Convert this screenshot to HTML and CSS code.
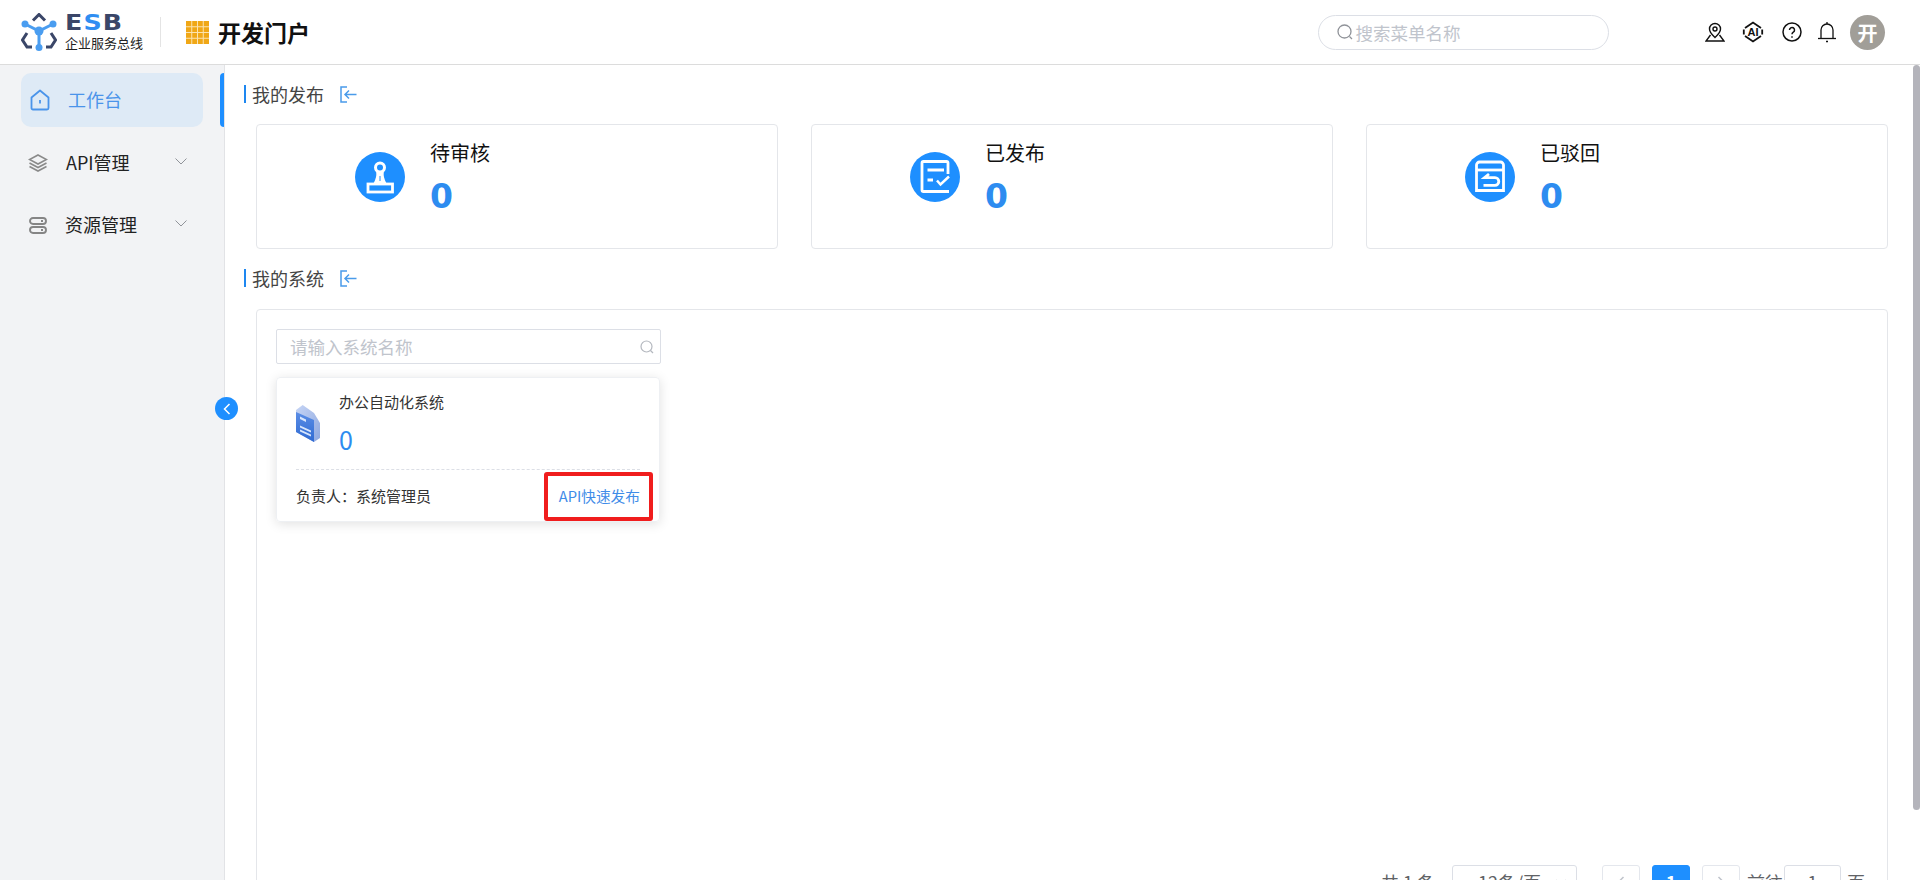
FILE: index.html
```html
<!DOCTYPE html>
<html lang="zh-CN">
<head>
<meta charset="utf-8">
<title>ESB 开发门户</title>
<link rel="stylesheet" href="styles.css">
</head>
<body>
<header class="topbar">
  <div class="brand">
    <svg class="brand-logo" viewBox="0 0 36 38" width="36" height="38" fill="none">
      <path d="M12 7.500 18 1.500 24 7.500" stroke="#3a4668" stroke-width="3"/>
      <path d="M6 20 1.500 27 6 34H11" stroke="#3a4668" stroke-width="3"/>
      <path d="M30 20 34.500 27 30 34H25" stroke="#3a4668" stroke-width="3"/>
      <path d="M4 11 18 18 32 11M18 18V34" stroke="#4a9df0" stroke-width="3"/>
      <circle cx="4" cy="11" r="3.500" fill="#4a9df0"/>
      <circle cx="32" cy="11" r="3.500" fill="#4a9df0"/>
      <circle cx="18" cy="18" r="4.500" fill="#4a9df0"/>
      <circle cx="18" cy="34.500" r="3.500" fill="#4a9df0"/>
    </svg>
    <div class="brand-text">
      <div class="brand-esb">E<span class="brand-s">S</span>B</div>
      <div class="brand-sub">企业服务总线</div>
    </div>
  </div>
  <div class="brand-divider"></div>
  <svg class="portal-grid" viewBox="0 0 23 23" width="23" height="23">
    <path d="M0 0h23v23H0z" fill="#f0a716"/>
    <path d="M5.750 0v23M11.500 0v23M17.250 0v23M0 5.750h23M0 11.500h23M0 17.250h23" stroke="#fbe3b0" stroke-width="1"/>
  </svg>
  <div class="portal-title">开发门户</div>
  <div class="top-search">
    <svg viewBox="0 0 18 18" width="18" height="18" fill="none" stroke="#909399" stroke-width="1.300"><circle cx="8.500" cy="8.500" r="6.500"/><path d="m13.500 13.500 2.500 2.500"/></svg>
    <span>搜索菜单名称</span>
  </div>
  <div class="top-icons">
    <svg viewBox="0 0 20 20" width="20" height="20" fill="none" stroke="#111" stroke-width="1.400"><path d="M10 15.500C7 12.500 4.500 10.500 4.500 7a5.500 5.500 0 0 1 11 0c0 3.500-2.500 5.500-5.500 8.500Z"/><circle cx="10" cy="7" r="2"/><path d="M5.500 13 1 19H19L14.500 13"/></svg>
    <svg viewBox="0 0 22 22" width="22" height="22" fill="none" stroke="#111" stroke-width="1.800"><path d="M3 7 11 1.500 19 7M3 15l8 5.500 8-5.500M1.800 8.500v5M20.200 8.500v5"/><text x="11" y="15" class="ai-text">AI</text></svg>
    <svg viewBox="0 0 20 20" width="20" height="20" fill="none" stroke="#111" stroke-width="1.500"><circle cx="10" cy="10" r="9"/><path d="M7.500 8a2.500 2.500 0 1 1 3.800 2.100c-.9.600-1.300 1-1.300 2.200"/><path d="M10 14.300v1.400"/></svg>
    <svg viewBox="0 0 20 22" width="20" height="22" fill="none" stroke="#111" stroke-width="1.300"><path d="M4 17V9a6 6 0 0 1 12 0v8"/><path d="M1 17.500h18"/><path d="M10 1v2M9 20.500h2"/></svg>
    <div class="avatar">开</div>
  </div>
</header>

<div class="layout">
  <aside class="sidebar">
    <a class="nav-item nav-active">
      <svg viewBox="0 0 20 22" width="20" height="22" fill="none" stroke="#4a94ea" stroke-width="1.800"><path d="M1.500 8.500 10 1.500l8.500 7V19a1.500 1.500 0 0 1-1.500 1.500H3A1.500 1.500 0 0 1 1.500 19Z" stroke-linejoin="round"/><path d="M10 11v3.500"/></svg>
      <span class="nav-label">工作台</span>
    </a>
    <a class="nav-item nav-api">
      <svg viewBox="0 0 20 18" width="20" height="18" fill="none" stroke="#8a8a8a" stroke-width="1.600"><path d="M10 1 18.500 5.500 10 10 1.500 5.500Z"/><path d="M1.500 9 10 13.500 18.500 9M1.500 12.500 10 17l8.500-4.500"/></svg>
      <span class="nav-label">API管理</span>
      <svg class="chev" viewBox="0 0 12 7" width="12" height="7" fill="none" stroke="#909399" stroke-width="1"><path d="m.5.500 5.500 5.500L11.500.500"/></svg>
    </a>
    <a class="nav-item nav-res">
      <svg viewBox="0 0 18 17" width="18" height="17" fill="none" stroke="#858585" stroke-width="1.900"><rect x="1" y="1" width="16" height="6" rx="3"/><rect x="1" y="10" width="16" height="6" rx="3"/><path d="M12 4h2M12 13h2"/></svg>
      <span class="nav-label">资源管理</span>
      <svg class="chev" viewBox="0 0 12 7" width="12" height="7" fill="none" stroke="#909399" stroke-width="1"><path d="m.5.500 5.500 5.500L11.500.500"/></svg>
    </a>
    <span class="active-bar"></span>
    <button class="collapse-btn" aria-label="收起">
      <svg viewBox="0 0 8 12" width="8" height="12" fill="none" stroke="#fff" stroke-width="1.500"><path d="M6.500 1 1.500 6l5 5"/></svg>
    </button>
  </aside>

  <main class="content">
    <div class="section-head">
      <span class="section-title">我的发布</span>
      <svg viewBox="0 0 17 17" width="17" height="17" fill="none" stroke="#4a9bea" stroke-width="1.500"><path d="M7 1H1v15h6"/><path d="M16.500 8.500H5M9 4.500l-4 4 4 4"/></svg>
    </div>
    <div class="stat-row">
      <div class="stat-card">
        <div class="stat-icon">
          <svg viewBox="0 0 50 50" width="50" height="50" fill="none" stroke="#fff" stroke-width="3"><circle cx="25" cy="15.500" r="4.500"/><path d="M22 20.500c.5 4-.5 7-2.500 10.500h11c-2-3.500-3-6.500-2.500-10.500Z" fill="#fff" stroke-width="1.500"/><path d="M25 24v5" stroke="#1e8fff" stroke-width="1"/><rect x="13" y="32" width="24.500" height="8" stroke-width="2.800"/></svg>
        </div>
        <div class="stat-body"><div class="stat-name">待审核</div><div class="stat-num">0</div></div>
      </div>
      <div class="stat-card">
        <div class="stat-icon">
          <svg viewBox="0 0 50 50" width="50" height="50" fill="none" stroke="#fff" stroke-width="2.800"><path d="M38 22V11a1.500 1.500 0 0 0-1.500-1.500H13.500A1.500 1.500 0 0 0 12 11v27a1.500 1.500 0 0 0 1.500 1.500H39"/><path d="M17.500 18H34M17.500 28H23"/><path d="M27 28.500l3.500 4 8.500-8" stroke-width="2.500"/></svg>
        </div>
        <div class="stat-body"><div class="stat-name">已发布</div><div class="stat-num">0</div></div>
      </div>
      <div class="stat-card">
        <div class="stat-icon">
          <svg viewBox="0 0 50 50" width="50" height="50" fill="none" stroke="#fff" stroke-width="2.800"><path d="M11.500 38.500V13a3 3 0 0 1 3-3h21a3 3 0 0 1 3 3v25.500Z"/><path d="M11.500 18h27"/><path d="M24 22l-4.500 3.700H30a3.800 3.800 0 0 1 0 7.600H18.500"/></svg>
        </div>
        <div class="stat-body"><div class="stat-name">已驳回</div><div class="stat-num">0</div></div>
      </div>
    </div>

    <div class="section-head section-head-second">
      <span class="section-title">我的系统</span>
      <svg viewBox="0 0 17 17" width="17" height="17" fill="none" stroke="#4a9bea" stroke-width="1.500"><path d="M7 1H1v15h6"/><path d="M16.500 8.500H5M9 4.500l-4 4 4 4"/></svg>
    </div>
    <div class="system-panel">
      <div class="system-search">
        <span>请输入系统名称</span>
        <svg viewBox="0 0 14 14" width="14" height="14" fill="none" stroke="#b4b8bf" stroke-width="1.200"><circle cx="6.500" cy="6.500" r="5.500"/><path d="m10.500 10.500 2.500 2.500"/></svg>
      </div>
      <div class="system-card">
        <div class="system-top">
          <svg class="system-icon" viewBox="0 0 25 37" width="25" height="37">
            <defs>
              <linearGradient id="sideGrad" x1="0" y1="0" x2="1" y2="1"><stop offset="0" stop-color="#c6d5f5"/><stop offset="1" stop-color="#8ea8e0"/></linearGradient>
              <linearGradient id="faceGrad" x1="0" y1="0" x2="0" y2="1"><stop offset="0" stop-color="#5b8ee6"/><stop offset="1" stop-color="#2f6ad2"/></linearGradient>
            </defs>
            <path d="M0 5 6.700 0 18 8l6 10v15l-6 4L0 27Z" fill="url(#sideGrad)"/>
            <path d="M0 7 18 15V37L0 27Z" fill="url(#faceGrad)"/>
            <path d="M4 11.500 10 14.500V17L4 14Z" fill="#d8e6fc"/>
            <path d="M4 20.500 15 25.500V27.500L4 22.500ZM4 24.500 15 29.500V31.500L4 26.500Z" fill="#d8e6fc"/>
          </svg>
          <div class="system-info">
            <div class="system-name">办公自动化系统</div>
            <div class="system-num">0</div>
          </div>
        </div>
        <div class="system-foot">
          <span class="owner">负责人：系统管理员</span>
          <a class="quick-link">API快速发布</a>
          <span class="red-mark"></span>
        </div>
      </div>
      <div class="pager">
        <span class="pager-total">共 1 条</span>
        <div class="pager-select"><span>12条/页</span>
          <svg viewBox="0 0 12 7" width="12" height="7" fill="none" stroke="#c0c4cc" stroke-width="1.200"><path d="m1 1 5 5 5-5"/></svg>
        </div>
        <div class="pager-btn"><svg viewBox="0 0 8 12" width="8" height="12" fill="none" stroke="#c0c4cc" stroke-width="1.500"><path d="M6.500 1 1.500 6l5 5"/></svg></div>
        <div class="pager-btn pager-current">1</div>
        <div class="pager-btn pager-next"><svg viewBox="0 0 8 12" width="8" height="12" fill="none" stroke="#c0c4cc" stroke-width="1.500"><path d="m1.500 1 5 5-5 5"/></svg></div>
        <span class="pager-text">前往</span>
        <div class="pager-input">1</div>
        <span class="pager-text">页</span>
      </div>
    </div>
  </main>
  <span class="scroll-thumb"></span>
</div>
</body>
</html>
```

FILE: styles.css
```css
* { box-sizing: border-box; }
html, body { margin: 0; height: 880px; overflow: hidden; background: #fff; }
body { font-family: "Noto Sans CJK SC", "Noto Sans", sans-serif; color: #222; }

.topbar { height: 65px; border-bottom: 1px solid #dcdcdc; display: flex; align-items: center; padding: 0 35px 0 21px; background: #fff; }
.brand { display: flex; align-items: center; gap: 8px; }
.brand-logo { display: block; }
.brand-text { display: flex; flex-direction: column; }
.brand-esb { font-family: "DejaVu Sans", sans-serif; font-weight: 700; font-size: 22px; line-height: 20px; letter-spacing: 1px; color: #3a4668; transform: scaleX(1.15); transform-origin: left center; }
.brand-s { color: #2f8ef2; }
.brand-sub { font-size: 13px; line-height: 18px; color: #222; margin-top: 1px; }
.brand-divider { width: 1px; height: 30px; background: #e4e4e4; margin: 0 25px 0 17px; }
.portal-grid { display: block; }
.portal-title { font-size: 23px; font-weight: 700; color: #111; margin-left: 9px; line-height: 30px; }
.top-search { margin-left: auto; width: 291px; height: 35px; border: 1px solid #dcdfe6; border-radius: 18px; display: flex; align-items: center; padding-left: 17px; gap: 2px; color: #c0c4cc; font-size: 17.500px; }
.top-icons { margin-left: 96px; display: flex; align-items: center; gap: 18px; }
.top-icons svg { display: block; }
.top-icons svg:nth-child(2) { margin-left: -1px; }
.top-icons svg:nth-child(4) { margin-left: -3px; }
.ai-text { font: 700 11px "Liberation Sans", sans-serif; fill: #111; stroke: none; text-anchor: middle; }
.avatar { width: 35px; height: 35px; border-radius: 50%; background: #a19e98; color: #fff; font-weight: 700; font-size: 20px; display: flex; align-items: center; justify-content: center; margin-left: -4.500px; }

.layout { position: relative; display: flex; height: 815px; }
.sidebar { position: relative; width: 225px; flex: none; background: #f2f3f5; border-right: 1px solid #e2e3e6; padding: 8px 21px 0; }
.nav-item { display: flex; align-items: center; height: 54px; margin-bottom: 9px; padding-left: 7px; gap: 18px; font-size: 18px; color: #222; width: 182px; }
.nav-api { margin-bottom: 8px; }
.nav-res { padding-left: 8px; gap: 18px; }
.nav-active { background: #deeaf6; border-radius: 10px; color: #4a94ea; padding-left: 9px; gap: 18px; }
.nav-label { line-height: 24px; white-space: nowrap; margin-top: -2px; }
.chev { margin-left: auto; margin-right: 16px; margin-top: -3px; }
.active-bar { position: absolute; right: 0; top: 8px; width: 4px; height: 54px; background: #1e8fff; border-radius: 4px 0 0 4px; }
.collapse-btn { position: absolute; right: -14px; top: 332px; width: 23px; height: 23px; border: 0; padding: 0; border-radius: 50%; background: #1e8fff; display: flex; align-items: center; justify-content: center; z-index: 2; }
.scroll-thumb { position: absolute; right: 0; top: 0; width: 7px; height: 745px; background: #b4b4bb; border-radius: 4px; }

.content { flex: 1; min-width: 0; padding: 0 32px 0 19px; }
.section-head { display: flex; align-items: center; height: 24px; margin-top: 17px; gap: 16px; }
.section-head-second { margin-top: 17px; }
.section-title { border-left: 2px solid #1e87f0; padding-left: 6px; font-size: 18px; line-height: 18px; color: #444; height: 18px; }
.stat-row { display: flex; gap: 33px; margin: 18px 0 0 12px; }
.stat-card { flex: 1; height: 125px; border: 1px solid #e4e6ea; border-radius: 4px; display: flex; align-items: flex-start; padding: 27px 0 0 98px; }
.stat-icon { width: 50px; height: 50px; border-radius: 50%; background: #1e8fff; flex: none; }
.stat-icon svg { display: block; }
.stat-body { margin-left: 25px; margin-top: -13px; }
.stat-name { font-size: 20px; line-height: 28px; color: #111; }
.stat-num { font-family: "DejaVu Sans", sans-serif; font-weight: 700; font-size: 33px; line-height: 40px; color: #2d8cf0; margin-top: 10px; }

.system-panel { margin: 19px 0 0 12px; height: 640px; border: 1px solid #e4e6ea; border-radius: 4px; padding: 19px 19px 0; }
.system-search { width: 385px; height: 35px; border: 1px solid #dcdfe6; border-radius: 2px; display: flex; align-items: center; justify-content: space-between; padding: 0 6px 0 13px; font-size: 17.500px; color: #c0c4cc; }
.system-card { width: 384px; height: 145px; margin-top: 13px; border: 1px solid #eef0f3; border-radius: 4px; box-shadow: 0 2px 12px rgba(0, 0, 0, .12); padding: 0 19px; }
.system-top { display: flex; height: 92px; border-bottom: 1px dashed #dcdfe6; }
.system-icon { display: block; margin-top: 27px; flex: none; }
.system-info { margin-left: 18px; }
.system-name { font-size: 15px; line-height: 22px; color: #333; margin-top: 13px; }
.system-num { font-size: 25px; line-height: 32px; color: #2d8cf0; margin-top: 10px; }
.system-foot { position: relative; display: flex; align-items: center; justify-content: space-between; height: 52px; padding-bottom: 2px; }
.owner { font-size: 15px; color: #333; }
.quick-link { font-size: 14.700px; color: #3f8ce8; }
.red-mark { position: absolute; right: -13px; top: 2px; width: 109px; height: 49px; border: 4px solid #f01d1d; border-radius: 3px; }

.pager { display: flex; align-items: center; margin-top: 343px; height: 34px; font-size: 18px; color: #606266; padding-left: 1105px; }
.pager-total { width: 71px; white-space: nowrap; }
.pager-select { width: 125px; height: 34px; border: 1px solid #dcdfe6; border-radius: 3px; display: flex; align-items: center; justify-content: space-between; padding: 0 9px 0 25px; color: #606266; margin-right: 25px; }
.pager-btn { width: 38px; height: 34px; border: 1px solid #e4e7ed; border-radius: 3px; display: flex; align-items: center; justify-content: center; margin-right: 12px; }
.pager-next { margin-right: 7px; }
.pager-current { background: #1e8fff; border-color: #1e8fff; color: #fff; font-weight: 700; }
.pager-text { white-space: nowrap; }
.pager-input { width: 57px; height: 34px; border: 1px solid #dcdfe6; border-radius: 3px; margin: 0 6px 0 1px; display: flex; align-items: center; justify-content: center; }
```
